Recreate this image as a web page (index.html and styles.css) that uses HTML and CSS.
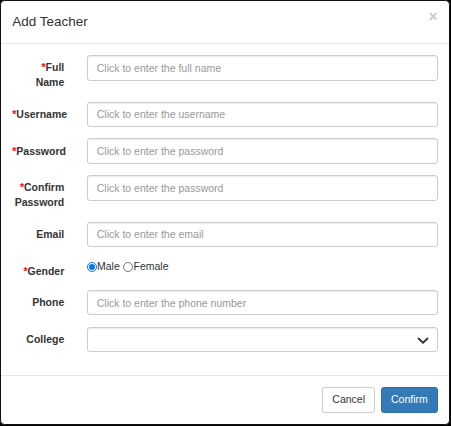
FILE: index.html
```html
<!DOCTYPE html>
<html lang="en">
<head>
<meta charset="utf-8">
<title>Add Teacher</title>
<link rel="stylesheet" href="styles.css">
</head>
<body>
<div class="modal">
  <div class="modal-header">
    <h4 class="modal-title">Add Teacher</h4>
    <button type="button" class="close">×</button>
  </div>
  <form class="modal-body">
    <div class="form-group">
      <label class="control-label"><span class="req">*</span>Full Name</label>
      <input class="form-control" type="text" placeholder="Click to enter the full name">
    </div>
    <div class="form-group">
      <label class="control-label"><span class="req">*</span>Username</label>
      <input class="form-control" type="text" placeholder="Click to enter the username">
    </div>
    <div class="form-group">
      <label class="control-label"><span class="req">*</span>Password</label>
      <input class="form-control" type="password" placeholder="Click to enter the password">
    </div>
    <div class="form-group">
      <label class="control-label"><span class="req">*</span>Confirm Password</label>
      <input class="form-control" type="password" placeholder="Click to enter the password">
    </div>
    <div class="form-group">
      <label class="control-label">Email</label>
      <input class="form-control" type="text" placeholder="Click to enter the email">
    </div>
    <div class="form-group">
      <label class="control-label"><span class="req">*</span>Gender</label>
      <div class="radio-group">
        <label class="radio"><input type="radio" name="gender" checked>Male</label>
        <label class="radio"><input type="radio" name="gender">Female</label>
      </div>
    </div>
    <div class="form-group">
      <label class="control-label">Phone</label>
      <input class="form-control" type="text" placeholder="Click to enter the phone number">
    </div>
    <div class="form-group">
      <label class="control-label">College</label>
      <div class="select-wrap">
        <select class="form-control select"><option></option></select>
        <svg class="chevron" width="12" height="7" viewBox="0 0 12 7"><polyline points="1,1 6,5.6 11,1" fill="none" stroke="#333" stroke-width="1.9"/></svg>
      </div>
    </div>
  </form>
  <div class="modal-footer">
    <button type="button" class="btn btn-default">Cancel</button>
    <button type="button" class="btn btn-primary">Confirm</button>
  </div>
</div>
</body>
</html>
```
FILE: styles.css
```css
html, body {
  margin: 0;
  padding: 0;
  background: #000;
}
body {
  font-family: "Liberation Sans", Arial, sans-serif;
  font-size: 10.5px;
  line-height: 15px;
  color: #333;
  width: 451px;
  height: 426px;
  overflow: hidden;
}
.modal {
  width: 450px;
  box-sizing: border-box;
  background: #fff;
  border: 1px solid #111;
  border-radius: 4.5px;
}
.modal-header {
  display: flex;
  justify-content: space-between;
  align-items: flex-start;
  padding: 11.25px;
  border-bottom: 1px solid #e5e5e5;
}
.modal-title {
  margin: 0;
  padding-top: 1px;
  font-size: 13.5px;
  line-height: 18.3px;
  font-weight: 500;
  color: #333;
}
.close {
  background: none;
  border: 0;
  padding: 0;
  margin-top: -3px;
  font-family: "Liberation Sans", Arial, sans-serif;
  font-size: 15.75px;
  font-weight: bold;
  line-height: 1;
  color: #000;
  opacity: 0.2;
}
.modal-body {
  margin: 0;
  padding: 11.25px;
}
.form-group {
  display: grid;
  grid-template-columns: 52px 1fr;
  column-gap: 22.5px;
  align-items: start;
  margin-bottom: 11.25px;
}
.control-label {
  padding-top: 5.25px;
  text-align: right;
  font-weight: bold;
  line-height: 15px;
}
.req {
  color: #f00;
}
.form-control {
  display: block;
  width: 100%;
  height: 25.5px;
  box-sizing: border-box;
  margin: 0;
  padding: 4.5px 9px;
  font-family: "Liberation Sans", Arial, sans-serif;
  font-size: 10.5px;
  line-height: 15px;
  color: #555;
  background: #fff;
  border: 1px solid #ccc;
  border-radius: 3px;
  box-shadow: inset 0 1px 1px rgba(0, 0, 0, 0.075);
}
.form-control::placeholder {
  color: #999;
}
.radio-group {
  display: flex;
  gap: 3.5px;
  padding-top: 1px;
  line-height: 15px;
}
.radio {
  display: inline-flex;
  align-items: center;
}
.radio input {
  width: 9.75px;
  height: 9.75px;
  margin: 0 0.5px 0 0;
}
.select-wrap {
  position: relative;
}
.select {
  appearance: none;
  -webkit-appearance: none;
}
.chevron {
  position: absolute;
  right: 8.5px;
  top: 10px;
  pointer-events: none;
}
.modal-footer {
  display: flex;
  justify-content: flex-end;
  gap: 6px;
  padding: 11.25px;
  border-top: 1px solid #e5e5e5;
}
.btn {
  margin: 0;
  padding: 4.5px 9px;
  font-family: "Liberation Sans", Arial, sans-serif;
  font-size: 10.5px;
  line-height: 15px;
  border: 1px solid transparent;
  border-radius: 3px;
}
.btn-default {
  color: #333;
  background: #fff;
  border-color: #ccc;
}
.btn-primary {
  color: #fff;
  background: #337ab7;
  border-color: #2e6da4;
}
```
